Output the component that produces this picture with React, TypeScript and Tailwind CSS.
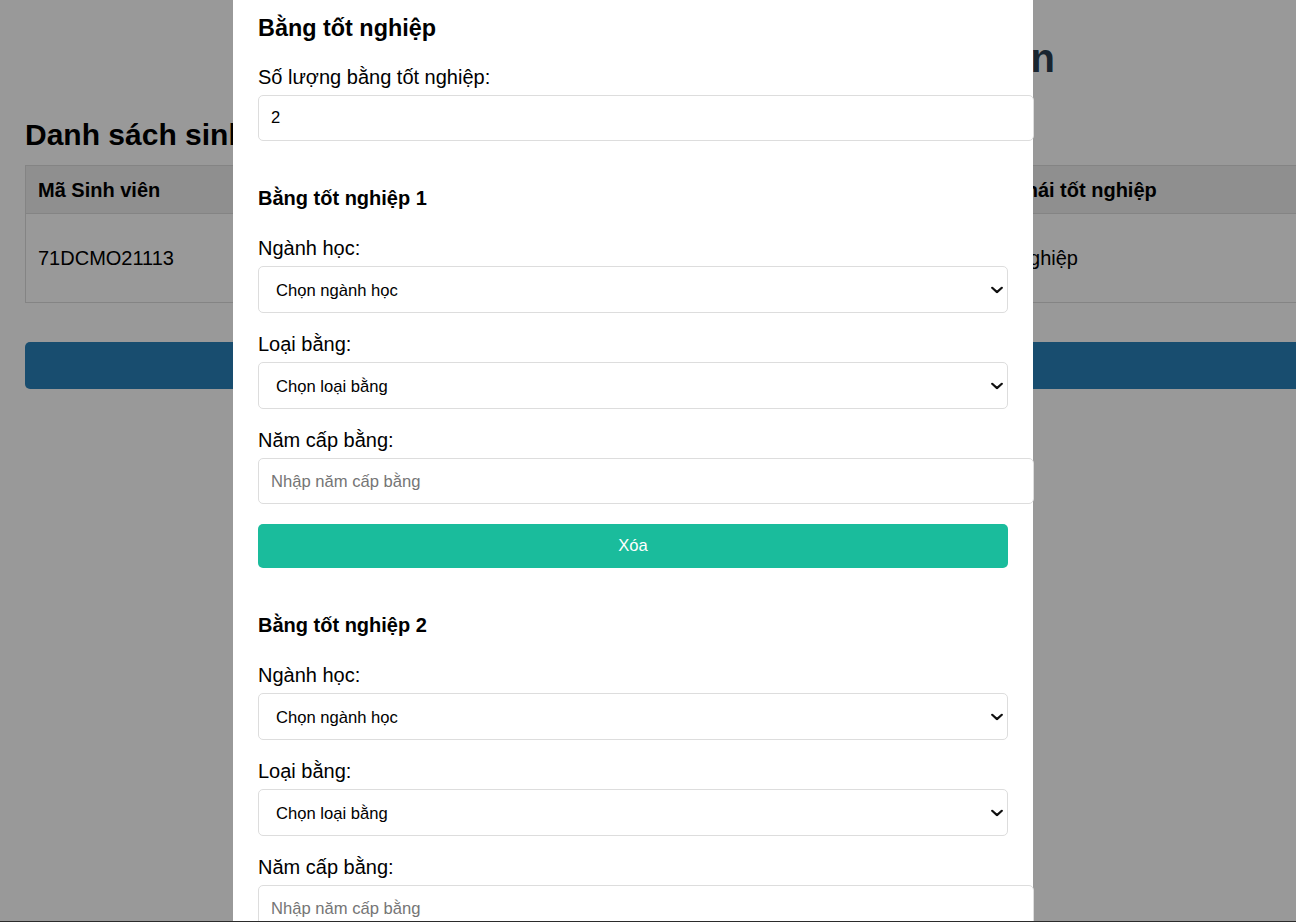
import { useState } from "react";

const heads = ["Mã Sinh viên", "Họ và tên", "Ngày sinh", "Ngành học", "Trạng thái tốt nghiệp"];
const row = ["71DCMO21113", "Nguyễn Văn An", "12/05/2002", "Quản trị", "Đã tốt nghiệp"];

function Chevron() {
  return (
    <svg width="12" height="7" viewBox="0 0 12 7" className="pointer-events-none absolute right-[5px] top-1/2 -translate-y-1/2">
      <polyline points="1.2,1.2 6,5.6 10.8,1.2" fill="none" stroke="#111" strokeWidth="2.2" strokeLinecap="round" strokeLinejoin="round" />
    </svg>
  );
}

function SelectBox({ placeholder }: { placeholder: string }) {
  return (
    <div className="relative mb-[18px]">
      <select
        defaultValue=""
        className="block h-[47px] w-full appearance-none rounded-[5px] border border-[#dddddd] bg-white pl-[17px] pt-[4px] text-[16.6px] text-black outline-none"
      >
        <option value="">{placeholder}</option>
      </select>
      <Chevron />
    </div>
  );
}

function Label({ children, sp = "pt-[2px] mb-[6px]" }: { children: string; sp?: string }) {
  return <label className={`block text-[20px] leading-[23px] text-black ${sp}`}>{children}</label>;
}

function Degree({ n }: { n: number }) {
  return (
    <div className="mt-[46px]">
      <h4 className="mb-[25px] text-[20px] font-bold leading-[23px] text-black">Bằng tốt nghiệp {n}</h4>
      <Label>Ngành học:</Label>
      <SelectBox placeholder="Chọn ngành học" />
      <Label>Loại bằng:</Label>
      <SelectBox placeholder="Chọn loại bằng" />
      <Label>Năm cấp bằng:</Label>
      <input
        placeholder="Nhập năm cấp bằng"
        className="mb-[20px] box-content block h-[20px] w-full rounded-[5px] border border-[#dddddd] px-[12px] pb-[11px] pt-[13px] text-[16.6px] text-black outline-none placeholder:text-[#757575]"
      />
      <button className="block h-[44px] w-full rounded-[5px] bg-[#1abc9c] text-[16.6px] text-white">Xóa</button>
    </div>
  );
}

export default function App() {
  const [count] = useState("2");

  return (
    <div className="relative h-screen overflow-hidden bg-white font-['Liberation_Sans',Arial,sans-serif] text-[20px]">
      {/* page behind the dialog */}
      <div className="px-[25px]">
        <h1 className="mt-[35px] whitespace-nowrap pr-[6px] text-center text-[40px] font-bold leading-[46px] text-[#2c3e50]">
          Hệ thống quản lý bằng tốt nghiệp sinh viên
        </h1>
        <h2 className="mt-[37px] text-[30px] font-bold leading-[34px] text-black">Danh sách sinh viên</h2>
        <div className="mt-[13px] w-[1400px] border border-[#dddddd]">
          <div className="grid h-[48px] grid-cols-[233px_230px_230px_228px_1fr] items-center border-b border-[#dddddd] bg-[#eeeeee] font-bold">
            {heads.map((h) => (
              <div key={h} className="px-[12px] whitespace-nowrap">{h}</div>
            ))}
          </div>
          <div className="grid h-[88px] grid-cols-[233px_230px_230px_228px_1fr] items-center">
            {row.map((c) => (
              <div key={c} className="px-[12px] whitespace-nowrap">{c}</div>
            ))}
          </div>
        </div>
        <button className="mt-[39px] h-[47px] w-[1400px] rounded-[5px] bg-[#2980b9] pl-[560px] text-left text-white">
          Thêm bằng tốt nghiệp
        </button>
      </div>

      {/* overlay */}
      <div className="fixed inset-0 bg-black/40" />

      {/* dialog */}
      <div className="fixed bottom-0 left-[233px] top-0 w-[800px] bg-white px-[25px] pt-[15px]">
        <h3 className="mb-[23px] text-[23.4px] font-bold leading-[27px] text-black">Bằng tốt nghiệp</h3>
        <Label sp="pt-[1px] mb-[6px]">Số lượng bằng tốt nghiệp:</Label>
        <input
          type="number"
          defaultValue={count}
          className="box-content block h-[20px] w-full appearance-none rounded-[5px] border border-[#dddddd] px-[12px] py-[12px] text-[16.6px] text-black outline-none [&::-webkit-inner-spin-button]:appearance-none"
        />
        <Degree n={1} />
        <Degree n={2} />
      </div>

      <div className="fixed bottom-0 left-0 right-0 h-px bg-[#2b2b2b]" />
    </div>
  );
}
